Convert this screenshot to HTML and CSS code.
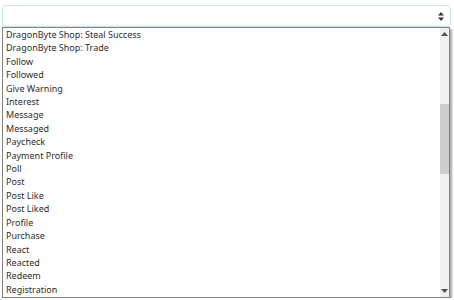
FILE: index.html
```html
<!DOCTYPE html>
<html lang="en">
<head>
    <meta charset="UTF-8">
    <meta name="viewport" content="width=device-width, initial-scale=1.0">
    <title>Alert type</title>
    <link rel="stylesheet" href="styles.css">
</head>
<body>
    <div class="field">
        <div class="select-box">
            <svg class="select-arrows" width="6" height="9" viewBox="0 0 6 9">
                <path d="M3 0 L6 3.5 L0 3.5 Z M0 5.5 L6 5.5 L3 9 Z" fill="#333"/>
            </svg>
        </div>

        <div class="dropdown">
            <ul class="options">
                <li>DragonByte Shop: Steal Success</li>
                <li>DragonByte Shop: Trade</li>
                <li>Follow</li>
                <li>Followed</li>
                <li>Give Warning</li>
                <li>Interest</li>
                <li>Message</li>
                <li>Messaged</li>
                <li>Paycheck</li>
                <li>Payment Profile</li>
                <li>Poll</li>
                <li>Post</li>
                <li>Post Like</li>
                <li>Post Liked</li>
                <li>Profile</li>
                <li>Purchase</li>
                <li>React</li>
                <li>Reacted</li>
                <li>Redeem</li>
                <li>Registration</li>
            </ul>
            <div class="scrollbar">
                <svg class="scroll-arrow" width="7" height="4" viewBox="0 0 7 4">
                    <path d="M3.5 0 L7 4 L0 4 Z" fill="#505050"/>
                </svg>
                <div class="scroll-track">
                    <div class="scroll-thumb"></div>
                </div>
                <svg class="scroll-arrow" width="7" height="4" viewBox="0 0 7 4">
                    <path d="M0 0 L7 0 L3.5 4 Z" fill="#505050"/>
                </svg>
            </div>
        </div>
    </div>
</body>
</html>
```

FILE: styles.css
```css
body {
    margin: 0;
    background-color: #fff;
    font-family: 'Noto Sans', 'Open Sans', sans-serif;
    color: #2d2d2d;
}
.field {
    padding: 5px 3px 0 2px;
}
.select-box {
    height: 20px;
    border: 1px solid #d4e2ec;
    border-radius: 3px;
    display: flex;
    align-items: center;
    justify-content: flex-end;
    padding-right: 6px;
    box-shadow: inset 0 -2px 2px #f3f6f8;
}
.dropdown {
    width: 446px;
    height: 269px;
    border: 1px solid #828282;
    background-color: #fff;
    box-shadow: 2px 2px 2px rgba(0, 0, 0, 0.35);
    display: flex;
}
.options {
    list-style: none;
    margin: 0;
    padding: 0;
    flex: 1;
    font-size: 9px;
}
.options li {
    height: 13.42px;
    line-height: 13.42px;
    padding-left: 3px;
    white-space: nowrap;
}
.scrollbar {
    width: 9px;
    background-color: #f0f0f0;
    display: flex;
    flex-direction: column;
    align-items: center;
    padding: 4px 0;
}
.scroll-arrow {
    flex: none;
}
.scroll-track {
    flex: 1;
    width: 100%;
    padding-top: 68px;
}
.scroll-thumb {
    height: 70px;
    background-color: #cdcdcd;
}
```
